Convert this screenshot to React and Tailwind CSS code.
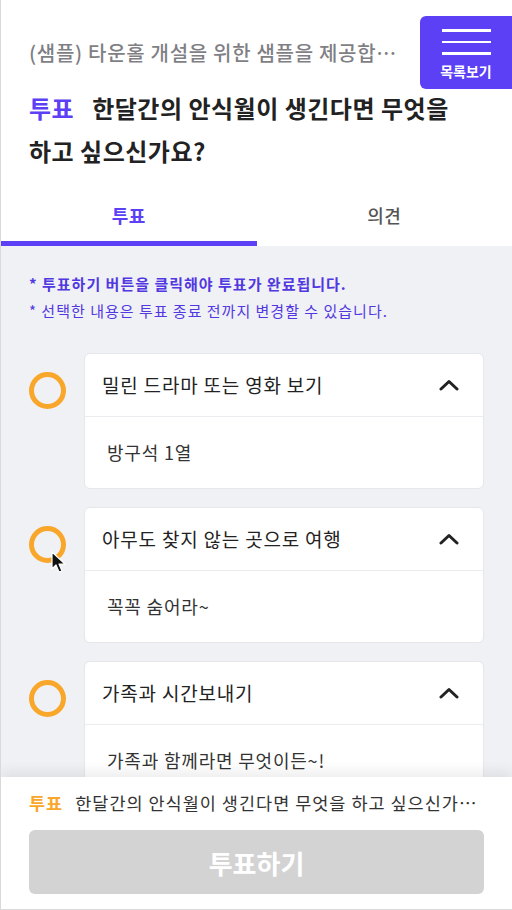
import React from "react";

const options = [
  { id: 1, title: "밀린 드라마 또는 영화 보기", desc: "방구석 1열" },
  { id: 2, title: "아무도 찾지 않는 곳으로 여행", desc: "꼭꼭 숨어라~" },
  { id: 3, title: "가족과 시간보내기", desc: "가족과 함께라면 무엇이든~!" },
];

const ChevronUp = () => (
  <svg width="20" height="14" viewBox="0 0 20 14" fill="none">
    <polyline
      points="2,11 10,3.5 18,11"
      stroke="#222"
      strokeWidth="3"
      strokeLinecap="round"
      strokeLinejoin="round"
    />
  </svg>
);

const OptionCard = ({ option }) => (
  <div className="flex items-start gap-[18px]">
    <div className="mt-[19px] w-[37px] h-[37px] rounded-full border-[5px] border-[#f9a72b] shrink-0" />
    <div className="flex-1 bg-white rounded-md border border-[#e6e7eb]">
      <div className="h-[63px] flex items-center justify-between pl-[17px] pr-[24px] border-b border-[#ebecef]">
        <span className="text-[19px] tracking-[0.8px] text-[#222]">{option.title}</span>
        <ChevronUp />
      </div>
      <div className="h-[71px] flex items-center pl-[22px] text-[18px] tracking-[0.8px] text-[#333]">
        {option.desc}
      </div>
    </div>
  </div>
);

export default function App() {
  return (
    <div className="relative w-[512px] h-[910px] overflow-hidden bg-white border-l border-b border-[#d9d9d9] flex flex-col font-['Noto_Sans_CJK_KR','Noto_Sans',sans-serif]">
      {/* Header */}
      <header className="pl-7">
        <div className="flex items-center pt-4 h-[89px]">
          <p className="flex-1 min-w-0 truncate text-[20px] tracking-[0.7px] font-medium text-[#7f7f85] pr-5">
            (샘플) 타운홀 개설을 위한 샘플을 제공합니다. 자유롭게 참여해 보세요
          </p>
          <button className="w-[92px] h-[73px] bg-[#5b40f5] rounded-l-md flex flex-col items-center justify-center shrink-0">
            <span className="flex flex-col gap-[9px] mt-[2px]">
              <span className="block w-[49px] h-[2.5px] bg-white" />
              <span className="block w-[49px] h-[2.5px] bg-white" />
              <span className="block w-[49px] h-[2.5px] bg-white" />
            </span>
            <span className="mt-[9px] text-[14px] font-bold text-white leading-none">
              목록보기
            </span>
          </button>
        </div>
        <h1 className="-mt-[3px] pr-7 break-keep text-[24px] tracking-[0.5px] font-bold leading-[43px] text-[#222]">
          <span className="text-[#5b40f5] mr-[18px]">투표</span>
          한달간의 안식월이 생긴다면 무엇을 하고 싶으신가요?
        </h1>
      </header>

      {/* Tabs */}
      <nav className="mt-[14px] grid grid-cols-2 h-[60px]">
        <div className="relative flex items-center justify-center pb-[2px] text-[18px] tracking-[0.5px] font-bold text-[#5b40f5]">
          투표
          <span className="absolute left-0 right-0 bottom-0 h-[5px] bg-[#5b40f5]" />
        </div>
        <div className="flex items-center justify-center pb-[2px] text-[18px] tracking-[0.5px] font-medium text-[#555]">
          의견
        </div>
      </nav>

      {/* Vote list */}
      <main className="flex-1 min-h-0 overflow-hidden bg-[#f0f1f5] px-7 pt-6">
        <div className="text-[15px] tracking-[1px] leading-[27px] text-[#5138e0]">
          <p className="font-bold">* 투표하기 버튼을 클릭해야 투표가 완료됩니다.</p>
          <p>* 선택한 내용은 투표 종료 전까지 변경할 수 있습니다.</p>
        </div>
        <div className="mt-[29px] flex flex-col gap-[18px]">
          {options.map((o) => (
            <OptionCard key={o.id} option={o} />
          ))}
        </div>
      </main>

      {/* Bottom sheet */}
      <footer className="relative z-10 bg-white px-7 pt-[13px] pb-[15px] shadow-[0_-6px_12px_rgba(0,0,0,0.07)]">
        <div className="flex items-center text-[17.5px] tracking-[1px] leading-[26px]">
          <span className="font-bold text-[#f9a72b] mr-[12px] shrink-0">투표</span>
          <span className="truncate text-[#333]">
            한달간의 안식월이 생긴다면 무엇을 하고 싶으신가요?
          </span>
        </div>
        <button className="mt-[14px] w-full h-[64px] rounded-md bg-[#d3d3d3] text-white text-[26px] font-bold">
          투표하기
        </button>
      </footer>

      {/* Mouse pointer */}
      <svg
        className="absolute left-[50px] top-[551px] z-20"
        width="16"
        height="24"
        viewBox="0 0 16 24"
      >
        <path
          d="M1 1 L1 18 L5 14 L8 21 L11 20 L8 13 L14 13 Z"
          fill="#111"
          stroke="#fff"
          strokeWidth="1.2"
          strokeLinejoin="round"
        />
      </svg>
    </div>
  );
}
